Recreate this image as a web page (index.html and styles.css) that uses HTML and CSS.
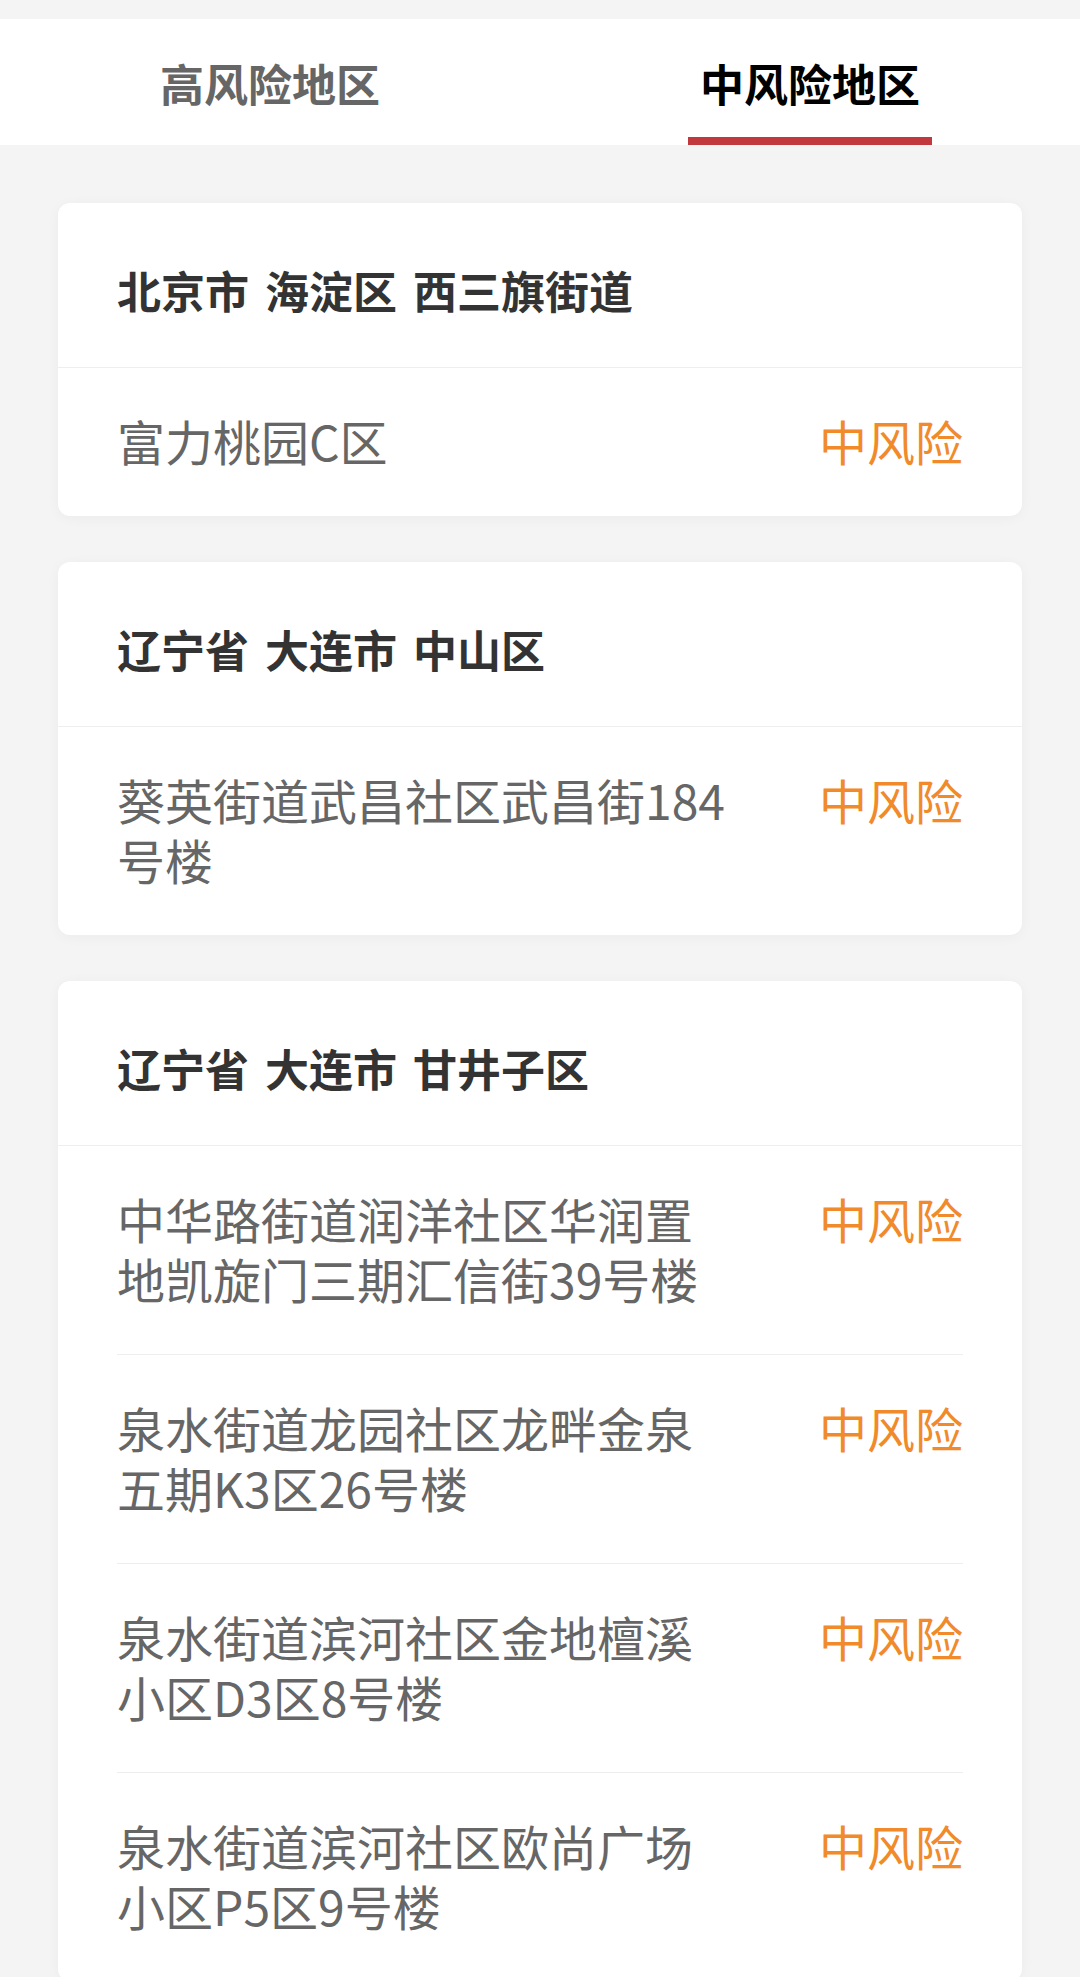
FILE: index.html
```html
<!DOCTYPE html>
<html lang="zh-CN">
<head>
  <meta charset="UTF-8">
  <meta name="viewport" content="width=device-width, initial-scale=1.0">
  <title>风险地区</title>
  <link rel="stylesheet" href="styles.css">
</head>
<body>
  <div class="tabs">
    <div class="tab"><span class="tab-label">高风险地区</span></div>
    <div class="tab active"><span class="tab-label">中风险地区</span></div>
  </div>

  <div class="list">
    <div class="card">
      <div class="card-head">北京市 海淀区 西三旗街道</div>
      <div class="rows">
        <div class="row">
          <div class="place">富力桃园C区</div>
          <div class="level">中风险</div>
        </div>
      </div>
    </div>

    <div class="card">
      <div class="card-head">辽宁省 大连市 中山区</div>
      <div class="rows">
        <div class="row">
          <div class="place">葵英街道武昌社区武昌街184号楼</div>
          <div class="level">中风险</div>
        </div>
      </div>
    </div>

    <div class="card">
      <div class="card-head">辽宁省 大连市 甘井子区</div>
      <div class="rows">
        <div class="row">
          <div class="place">中华路街道润洋社区华润置地凯旋门三期汇信街39号楼</div>
          <div class="level">中风险</div>
        </div>
        <div class="row">
          <div class="place">泉水街道龙园社区龙畔金泉五期K3区26号楼</div>
          <div class="level">中风险</div>
        </div>
        <div class="row">
          <div class="place">泉水街道滨河社区金地檀溪小区D3区8号楼</div>
          <div class="level">中风险</div>
        </div>
        <div class="row">
          <div class="place">泉水街道滨河社区欧尚广场小区P5区9号楼</div>
          <div class="level">中风险</div>
        </div>
      </div>
    </div>
  </div>
</body>
</html>
```

FILE: styles.css
```css
body {
  margin: 0;
  padding-top: 19px;
  background: #f4f4f4;
  font-family: "Noto Sans CJK SC", "Noto Sans", sans-serif;
}
.tabs {
  display: flex;
  background: #ffffff;
  height: 126px;
}
.tab {
  flex: 1;
  text-align: center;
  font-size: 44px;
  font-weight: bold;
  color: #666666;
}
.tab-label {
  display: inline-block;
  padding: 34px 12px 24px;
  line-height: 60px;
  border-bottom: 8px solid transparent;
}
.tab.active {
  color: #000000;
}
.tab.active .tab-label {
  border-bottom-color: #c1383f;
}
.list {
  display: flex;
  flex-direction: column;
  gap: 46px;
  padding: 58px 58px 0;
}
.card {
  background: #ffffff;
  border-radius: 12px;
  box-shadow: 0 2px 14px rgba(0, 0, 0, 0.04);
}
.card-head {
  padding: 57px 59px 47px;
  line-height: 60px;
  font-size: 44px;
  font-weight: bold;
  word-spacing: 6px;
  color: #333333;
  border-bottom: 1px solid #eeeeee;
}
.rows {
  padding: 0 59px;
}
.row {
  display: flex;
  align-items: flex-start;
  padding: 42px 0 46px;
  font-size: 48px;
  line-height: 60px;
}
.row + .row {
  border-top: 1px solid #eeeeee;
}
.place {
  flex: 1;
  margin-right: 87px;
  color: #666666;
}
.level {
  color: #f08a2a;
  white-space: nowrap;
}
```
